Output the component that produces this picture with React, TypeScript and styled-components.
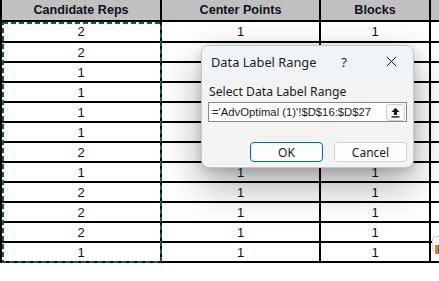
import React from 'react';
import styled, { createGlobalStyle } from 'styled-components';

const GlobalStyle = createGlobalStyle`
  html, body {
    margin: 0;
    padding: 0;
    background: #ffffff;
    overflow: hidden;
  }
`;

const candidateReps = [2, 2, 1, 1, 1, 1, 2, 1, 2, 2, 2, 1];
// rows whose middle columns sit under the dialog
const covered = (i: number) => i >= 1 && i <= 6;

const Sheet = styled.div`
  position: relative;
  width: 439px;
  height: 281px;
  overflow: hidden;
  background: #ffffff;
`;

const Grid = styled.div`
  display: grid;
  grid-template-columns: 158px 157px 108px 20px;
  grid-template-rows: 20px 19px;
  grid-auto-rows: 18px;
  column-gap: 2px;
  row-gap: 2px;
  padding: 0 0 2px 2px;
  background: #000000;
  width: max-content;
`;

const HeadCell = styled.div`
  background: #c0c0c0;
  display: flex;
  align-items: center;
  justify-content: center;
  font-family: 'Liberation Sans', Arial, sans-serif;
  font-weight: 700;
  font-size: 12.6px;
  color: #10101c;
`;

const Cell = styled.div`
  background: #ffffff;
  display: flex;
  align-items: center;
  justify-content: center;
  font-family: 'Liberation Sans', Arial, sans-serif;
  font-size: 13px;
  color: #10101c;
`;

const Selection = styled.svg`
  position: absolute;
  left: 2px;
  top: 22px;
  width: 160px;
  height: 241px;
  pointer-events: none;
`;

const Dialog = styled.div`
  position: absolute;
  left: 201px;
  top: 45px;
  width: 213px;
  height: 123px;
  box-sizing: border-box;
  border: 1px solid #c6c6c6;
  border-radius: 8px;
  background: #f3f3f3;
  box-shadow: 0 16px 40px rgba(0, 0, 0, 0.36), 0 3px 8px rgba(0, 0, 0, 0.14);
  overflow: hidden;
  display: flex;
  flex-direction: column;
  font-family: 'Noto Sans', 'Open Sans', sans-serif;
  color: #1b1b1b;
`;

const TitleBar = styled.div`
  height: 31px;
  flex: none;
  background: #eff4f9;
  display: flex;
  align-items: center;
  padding-left: 9px;
  font-size: 12.8px;
`;

const Title = styled.span`
  flex: 1;
`;

const HelpMark = styled.span`
  width: 18px;
  margin-right: 20px;
  font-size: 13px;
  text-align: center;
`;

const CloseBox = styled.span`
  width: 36px;
  display: flex;
  justify-content: center;
  margin-right: 4px;
`;

const Body = styled.div`
  display: flex;
  flex-direction: column;
  padding: 8px 6px 0 6px;
`;

const FieldLabel = styled.div`
  font-size: 12.2px;
  line-height: 14px;
  margin-left: 1px;
`;

const RangeInput = styled.div`
  margin-top: 3px;
  height: 20px;
  box-sizing: border-box;
  border: 1px solid #8a8a8a;
  background: #ffffff;
  display: flex;
  align-items: center;
  padding-left: 3px;
  font-family: 'Liberation Sans', Arial, sans-serif;
  font-size: 11.3px;
`;

const RangeText = styled.span`
  flex: 1;
  white-space: nowrap;
`;

const CollapseButton = styled.span`
  width: 19px;
  height: 17px;
  box-sizing: border-box;
  border: 1px solid #cfcfcf;
  border-radius: 3px;
  background: #fbfbfb;
  display: flex;
  align-items: center;
  justify-content: center;
  margin-right: 1px;
`;

const ButtonRow = styled.div`
  display: flex;
  justify-content: flex-end;
  gap: 11px;
  margin-top: 20px;
`;

const DialogButton = styled.button<{ $primary?: boolean }>`
  width: 73px;
  height: 20px;
  box-sizing: border-box;
  border-radius: 4px;
  border: 1px solid ${p => (p.$primary ? '#0067c0' : '#d0d0d0')};
  background: #fdfdfd;
  font-family: 'Noto Sans', 'Open Sans', sans-serif;
  font-size: 12px;
  color: #1b1b1b;
  padding: 0;
`;

const PasteTag = styled.div`
  position: absolute;
  left: 432px;
  top: 236px;
  width: 20px;
  height: 16px;
  box-sizing: border-box;
  border: 1px solid #d6d6d6;
  border-radius: 3px;
  background: #f7f7f7;
  padding: 3px 0 0 2px;
`;

const UploadIcon = () => (
  <svg width="11" height="11" viewBox="0 0 11 11">
    <path d="M5.5 0.8 L9.6 5 H7 V8 H4 V5 H1.4 Z" fill="#1b1b1b" />
    <rect x="1.5" y="9.2" width="8" height="1.4" fill="#1b1b1b" />
  </svg>
);

const CloseIcon = () => (
  <svg width="11" height="11" viewBox="0 0 11 11">
    <path d="M0.8 0.8 L10.2 10.2 M10.2 0.8 L0.8 10.2" stroke="#1b1b1b" strokeWidth="1" />
  </svg>
);

const PasteGlyph = () => (
  <svg width="6" height="9" viewBox="0 0 6 9">
    <rect x="0" y="0" width="3" height="9" fill="#d9822b" />
    <rect x="3" y="0" width="3" height="9" fill="#3b5cc4" />
  </svg>
);

export default function App() {
  return (
    <Sheet>
      <GlobalStyle />
      <Grid>
        <HeadCell>Candidate Reps</HeadCell>
        <HeadCell>Center Points</HeadCell>
        <HeadCell>Blocks</HeadCell>
        <HeadCell />
        {candidateReps.map((reps, i) => (
          <React.Fragment key={i}>
            <Cell>{reps}</Cell>
            <Cell>{covered(i) ? null : 1}</Cell>
            <Cell>{covered(i) ? null : 1}</Cell>
            <Cell />
          </React.Fragment>
        ))}
      </Grid>
      <Selection viewBox="0 0 160 241">
        <rect
          x="1"
          y="1"
          width="158"
          height="239"
          fill="none"
          stroke="#0c6632"
          strokeWidth="2"
          strokeDasharray="5 3"
          shapeRendering="crispEdges"
        />
      </Selection>
      <PasteTag>
        <PasteGlyph />
      </PasteTag>
      <Dialog>
        <TitleBar>
          <Title>Data Label Range</Title>
          <HelpMark>?</HelpMark>
          <CloseBox>
            <CloseIcon />
          </CloseBox>
        </TitleBar>
        <Body>
          <FieldLabel>Select Data Label Range</FieldLabel>
          <RangeInput>
            <RangeText>='AdvOptimal (1)'!$D$16:$D$27</RangeText>
            <CollapseButton>
              <UploadIcon />
            </CollapseButton>
          </RangeInput>
          <ButtonRow>
            <DialogButton $primary>OK</DialogButton>
            <DialogButton>Cancel</DialogButton>
          </ButtonRow>
        </Body>
      </Dialog>
    </Sheet>
  );
}
